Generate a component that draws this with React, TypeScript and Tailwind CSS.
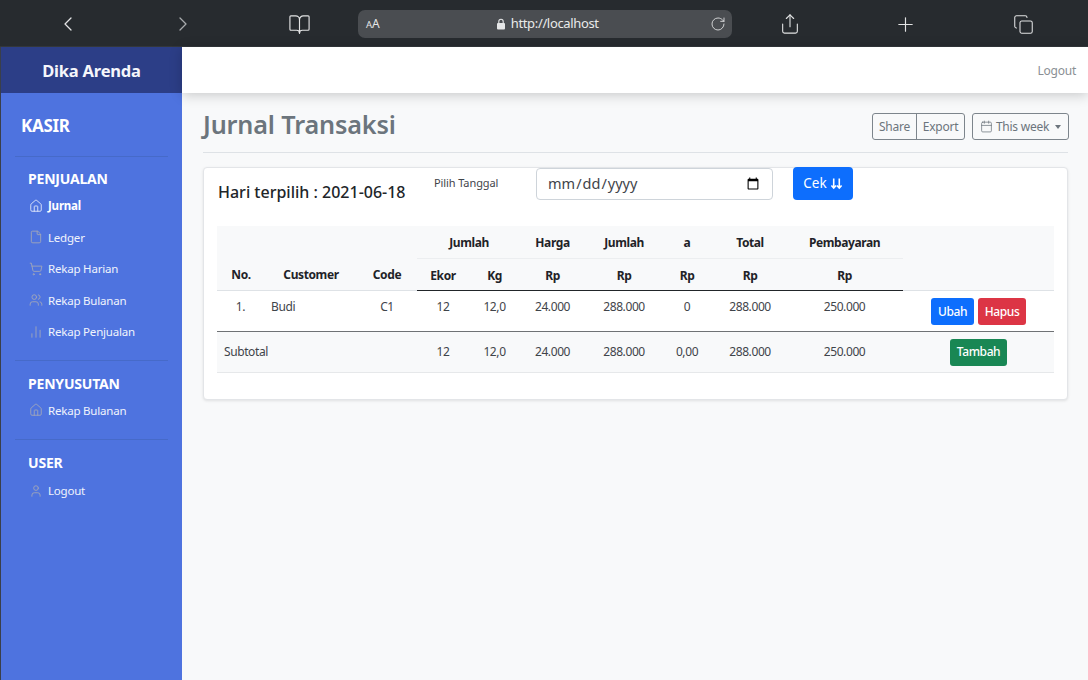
import React from "react";
import { Home, File, ShoppingCart, Users, BarChart2, User, Calendar, ChevronLeft, ChevronRight, BookOpen, Plus, Copy, RotateCw, Share } from "lucide-react";

function NavItem({ icon: Icon, label, active }: { icon: any; label: string; active?: boolean }) {
  return (
    <div className="flex h-[31.5px] items-center pl-[28px]">
      <Icon size={14} strokeWidth={1.5} className={active ? "text-[#e6ebfa]" : "text-[#a3a8b8]"} />
      <span className={`ml-[5px] text-[11.5px] tracking-[-0.2px] ${active ? "font-bold text-white" : "text-[#f0f3fc]"}`}>{label}</span>
    </div>
  );
}

function SectionTitle({ children }: { children: React.ReactNode }) {
  return <div className="pl-[27px] text-[14px] leading-[20px] font-bold tracking-[-0.2px] text-white">{children}</div>;
}

function CekArrows() {
  return (
    <svg viewBox="0 0 14 14" className="ml-[3px] h-[13px] w-[13px]" fill="none" stroke="white" strokeWidth="1.7">
      <path d="M4 1.5V12M1.5 9.2L4 12l2.5-2.8M10 1.5V12M7.5 9.2L10 12l2.5-2.8" />
    </svg>
  );
}

const cell = "text-center text-[12px] font-normal text-[#3f444a] tracking-[-0.4px] align-middle p-0";
const th = "text-center text-[12px] font-bold text-[#1f2328] tracking-[-0.4px] align-middle p-0";
const th1 = `${th} border-b border-[#eceef0] pt-[2px]`;
const th2 = `${th} pt-[3px]`;

export default function App() {
  return (
    <div className="flex h-[680px] w-[1088px] flex-col overflow-hidden bg-[#f8f9fa] font-['Noto_Sans','Open_Sans',sans-serif]">
      {/* browser chrome */}
      <div className="flex h-[47px] shrink-0 items-center border-b border-[#33373b] bg-[#272b2f] pt-[2px] text-[#e2e3e4]">
        <div className="flex w-[358px] items-center">
          <ChevronLeft size={24} strokeWidth={1.3} className="ml-[56px]" />
          <ChevronRight size={24} strokeWidth={1.3} className="ml-[91px] text-[#a8abad]" />
          <BookOpen size={23} strokeWidth={1.2} className="ml-[93px]" />
        </div>
        <div className="flex h-[28px] w-[374px] items-center rounded-[7px] bg-[#4a4d51] pl-[8px] pr-[6px]">
          <span className="text-[12px] leading-none text-[#e5e6e7]"><span className="text-[9.5px]">A</span>A</span>
          <svg viewBox="0 0 10 12" className="ml-[116px] h-[12px] w-[10px]" fill="#e5e6e7">
            <rect x="1" y="5" width="8" height="6.5" rx="1" />
            <path d="M2.8 5V3.4a2.2 2.2 0 0 1 4.4 0V5" fill="none" stroke="#e5e6e7" strokeWidth="1.1" />
          </svg>
          <span className="ml-[5px] text-[13px] tracking-[-0.35px] text-[#e9eaea]">http://localhost</span>
          <RotateCw size={16} strokeWidth={1.3} className="ml-auto" />
        </div>
        <Share size={22} strokeWidth={1.2} className="ml-[47px]" />
        <Plus size={23} strokeWidth={1.2} className="ml-[93px]" />
        <Copy size={21} strokeWidth={1.2} className="ml-[96px]" />
      </div>

      <div className="flex min-h-0 flex-1">
        <div className="w-[1px] shrink-0 bg-[#3a3f4a]" />
        <aside className="flex w-[181px] shrink-0 flex-col bg-[#4e73df]">
          <div className="flex h-[46px] items-center justify-center bg-[#2c3e87] pt-[2px] text-[16.5px] font-bold tracking-[-0.2px] text-[#f5f6fb]">
            Dika Arenda
          </div>
          <div className="pl-[20px] pt-[22px] text-[17px] leading-[22px] font-bold tracking-[-0.3px] text-white">KASIR</div>
          <div className="mx-[14px] mt-[19px] mb-[12px] h-px bg-[#466ac9]" />
          <SectionTitle>PENJUALAN</SectionTitle>
          <div className="mt-[1px]">
            <NavItem icon={Home} label="Jurnal" active />
            <NavItem icon={File} label="Ledger" />
            <NavItem icon={ShoppingCart} label="Rekap Harian" />
            <NavItem icon={Users} label="Rekap Bulanan" />
            <NavItem icon={BarChart2} label="Rekap Penjualan" />
          </div>
          <div className="mx-[14px] mt-[12px] mb-[13px] h-px bg-[#466ac9]" />
          <SectionTitle>PENYUSUTAN</SectionTitle>
          <div className="mt-[1px]">
            <NavItem icon={Home} label="Rekap Bulanan" />
          </div>
          <div className="mx-[14px] mt-[13px] mb-[13px] h-px bg-[#466ac9]" />
          <SectionTitle>USER</SectionTitle>
          <div className="mt-[2px]">
            <NavItem icon={User} label="Logout" />
          </div>
        </aside>

        <div className="flex min-w-0 flex-1 flex-col">
          <header className="relative flex h-[46px] shrink-0 items-center justify-end bg-white pt-[1px] pr-[12px] shadow-[0_2px_12px_rgba(0,0,0,0.2)]">
            <span className="text-[12px] tracking-[-0.25px] text-[#8a8f94]">Logout</span>
          </header>
          <div className="pr-[20px] pl-[21px]">
            <div className="flex h-[60px] items-start justify-between border-b border-[#dee2e6]">
              <h1 className="mt-[13px] text-[25.2px] leading-[36px] font-semibold tracking-[-0.15px] text-[#6c757d]">Jurnal Transaksi</h1>
              <div className="mt-[20px] -mr-[1px] flex items-center text-[12px] tracking-[-0.25px] text-[#6c757d]">
                <div className="flex h-[27px] items-center rounded-[3px] border border-[#7d858c]">
                  <span className="flex h-full w-[44px] items-center justify-center border-r border-[#7d858c]">Share</span>
                  <span className="flex h-full w-[47px] items-center justify-center">Export</span>
                </div>
                <div className="ml-[7px] flex h-[27px] w-[97px] items-center justify-center rounded-[3px] border border-[#7d858c]">
                  <Calendar size={13} strokeWidth={1.4} />
                  <span className="ml-[3px]">This week</span>
                  <span className="ml-[6px] h-0 w-0 border-x-[3.5px] border-t-[4px] border-x-transparent border-t-[#6c757d]" />
                </div>
              </div>
            </div>

            <div className="mt-[14px] h-[233px] rounded-[4px] border border-[#e3e5e8] bg-white px-[13px] shadow-[0_1px_3px_rgba(0,0,0,0.1)]">
              <div className="flex h-[58px]">
                <div className="w-[217px] pt-[12px] pl-[1px] text-[16px] leading-[24px] font-medium text-[#212529]">Hari terpilih : 2021-06-18</div>
                <div className="w-[102px] pt-[7px] text-[11px] leading-[16px] tracking-[-0.1px] text-[#3f444a]">Pilih Tanggal</div>
                <input
                  type="date"
                  className="h-[32px] w-[237px] rounded-[4px] border border-[#ced4da] bg-white px-[10px] text-[14.5px] text-[#3f444a]"
                />
                <button className="-mt-[1px] ml-[20px] flex h-[33px] w-[60px] items-center justify-center rounded-[4px] bg-[#0d6efd] text-[13.5px] text-white">
                  Cek
                  <CekArrows />
                </button>
              </div>
              <table className="w-[837px] table-fixed border-collapse">
                <colgroup>
                  <col className="w-[48px]" />
                  <col className="w-[92px]" />
                  <col className="w-[60px]" />
                  <col className="w-[52px]" />
                  <col className="w-[52px]" />
                  <col className="w-[65px]" />
                  <col className="w-[76px]" />
                  <col className="w-[50px]" />
                  <col className="w-[76px]" />
                  <col className="w-[115px]" />
                  <col className="w-[151px]" />
                </colgroup>
                <thead className="bg-[#f8f9fa]">
                  <tr className="h-[32px]">
                    <th className={th} colSpan={3} />
                    <th className={th1} colSpan={2}>Jumlah</th>
                    <th className={`${th1} pr-[2px]`}>Harga</th>
                    <th className={th1}>Jumlah</th>
                    <th className={th1}>a</th>
                    <th className={th1}>Total</th>
                    <th className={`${th1} pr-[2px]`}>Pembayaran</th>
                    <th className={th} />
                  </tr>
                  <tr className="h-[32px]">
                    <th className={`${th2} border-b border-[#dee2e6]`}>No.</th>
                    <th className={`${th2} border-b border-[#dee2e6]`}>Customer</th>
                    <th className={`${th2} border-b border-[#dee2e6]`}>Code</th>
                    <th className={`${th2} border-b border-[#212529]`}>Ekor</th>
                    <th className={`${th2} border-b border-[#212529] pr-[1px]`}>Kg</th>
                    <th className={`${th2} border-b border-[#212529] pr-[2px]`}>Rp</th>
                    <th className={`${th2} border-b border-[#212529]`}>Rp</th>
                    <th className={`${th2} border-b border-[#212529]`}>Rp</th>
                    <th className={`${th2} border-b border-[#212529]`}>Rp</th>
                    <th className={`${th2} border-b border-[#212529] pr-[2px]`}>Rp</th>
                    <th className={`${th2} border-b border-[#dee2e6]`} />
                  </tr>
                </thead>
                <tbody>
                  <tr className="h-[41px] border-b border-[#6f7275]">
                    <td className={`${cell} pb-[8px] pr-[1px]`}>1.</td>
                    <td className={`${cell} pb-[8px] pl-[6px] text-left`}>Budi</td>
                    <td className={`${cell} pb-[8px]`}>C1</td>
                    <td className={`${cell} pb-[8px]`}>12</td>
                    <td className={`${cell} pb-[8px] pr-[1px]`}>12,0</td>
                    <td className={`${cell} pb-[8px] pr-[2px]`}>24.000</td>
                    <td className={`${cell} pb-[8px]`}>288.000</td>
                    <td className={`${cell} pb-[8px]`}>0</td>
                    <td className={`${cell} pb-[8px]`}>288.000</td>
                    <td className={`${cell} pb-[8px] pr-[2px]`}>250.000</td>
                    <td className={`${cell} pt-[2px]`}>
                      <div className="flex items-center justify-center gap-[4px]">
                        <button className="h-[27px] w-[43px] rounded-[3px] bg-[#0d6efd] text-[12px] font-medium text-white">Ubah</button>
                        <button className="h-[27px] w-[48px] rounded-[3px] bg-[#dc3545] text-[12px] font-medium text-white">Hapus</button>
                      </div>
                    </td>
                  </tr>
                  <tr className="h-[41px] border-b border-[#e6e8ea] bg-[#f8f9fa]">
                    <td className={`${cell} pl-[7px] pt-[1px] text-left`} colSpan={3}>Subtotal</td>
                    <td className={`${cell} pt-[1px]`}>12</td>
                    <td className={`${cell} pt-[1px] pr-[1px]`}>12,0</td>
                    <td className={`${cell} pt-[1px] pr-[2px]`}>24.000</td>
                    <td className={`${cell} pt-[1px]`}>288.000</td>
                    <td className={`${cell} pt-[1px]`}>0,00</td>
                    <td className={`${cell} pt-[1px]`}>288.000</td>
                    <td className={`${cell} pt-[1px] pr-[2px]`}>250.000</td>
                    <td className={`${cell} pt-[1px]`}>
                      <div className="flex justify-center">
                        <button className="h-[27px] w-[57px] rounded-[3px] bg-[#198754] text-[12px] font-medium text-white">Tambah</button>
                      </div>
                    </td>
                  </tr>
                </tbody>
              </table>
            </div>
          </div>
        </div>
      </div>
    </div>
  );
}
